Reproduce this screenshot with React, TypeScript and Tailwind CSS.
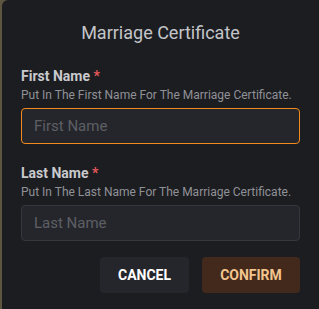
const Field = ({
  label,
  help,
  placeholder,
  focused,
}: {
  label: string;
  help: string;
  placeholder: string;
  focused?: boolean;
}) => (
  <div>
    <label className="block text-[14px] font-bold leading-[20px] text-[#c9cacd]">
      {label} <span className="text-[#e2585a]">*</span>
    </label>
    <p className="mt-[1px] text-[12px] leading-[16px] text-[#909197]">{help}</p>
    <input
      type="text"
      placeholder={placeholder}
      className={
        focused
          ? "mt-[5px] block h-[36px] w-full rounded-[4px] border border-[#f18a1a] bg-[#25262b] px-[12px] text-[15px] text-[#c9cacd] outline-none placeholder:text-[#5d5f65]"
          : "mt-[5px] block h-[36px] w-full rounded-[4px] border border-[#36373c] bg-[#25262b] px-[12px] text-[15px] text-[#c9cacd] outline-none placeholder:text-[#5d5f65]"
      }
    />
  </div>
);

export default function App() {
  return (
    <div
      className="flex h-[309px] w-[319px] bg-[#5e5541]"
      style={{ fontFamily: "Roboto, 'Liberation Sans', sans-serif" }}
    >
      <div className="ml-[2px] flex-1 rounded-tl-[6px] bg-[#1c1d21] px-[19px] pt-[19px]">
        <h1 className="text-center text-[18px] leading-[28px] text-[#c4c5c9]">
          Marriage Certificate
        </h1>

        <div className="mt-[19px] flex flex-col gap-[19px]">
          <Field
            label="First Name"
            help="Put In The First Name For The Marriage Certificate."
            placeholder="First Name"
            focused
          />
          <Field
            label="Last Name"
            help="Put In The Last Name For The Marriage Certificate."
            placeholder="Last Name"
          />
        </div>

        <div className="mt-[16px] flex justify-end gap-[13px]">
          <button className="h-[36px] w-[89px] rounded-[4px] bg-[#25262b] text-[14px] font-bold text-white">
            CANCEL
          </button>
          <button className="h-[36px] w-[98px] rounded-[4px] bg-[#42291b] text-[14px] font-bold text-[#f3c58e]">
            CONFIRM
          </button>
        </div>
      </div>
    </div>
  );
}
